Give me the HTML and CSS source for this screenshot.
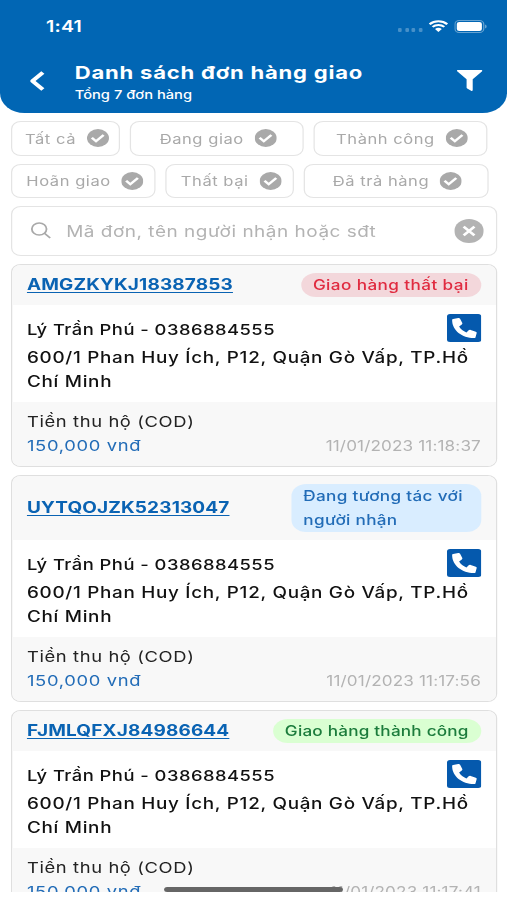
FILE: index.html
```html
<!DOCTYPE html>
<html lang="vi">
<head>
    <meta charset="UTF-8">
    <meta name="viewport" content="width=device-width, initial-scale=1.0">
    <title>Danh sách đơn hàng giao</title>
    <link rel="stylesheet" href="styles.css">
</head>
<body>
    <!-- Shared icons -->
    <svg class="icon-defs" width="0" height="0">
        <symbol id="check" viewBox="0 0 18 18">
            <circle cx="9" cy="9" r="9" fill="#a9a9a9"/>
            <path d="M4 8.800l3.400 3.400 6.200-6.200" fill="none" stroke="#fff" stroke-width="2.300"/>
        </symbol>
        <symbol id="phone" viewBox="0 0 28 28">
            <rect width="28" height="28" rx="2.500" fill="#0559ad"/>
            <path d="M4.2 6.2C4 5.500 4.300 5.100 5 4.900l4.200-.9c.7-.1 1.200.2 1.500.8l1.800 4.300c.2.6.1 1.100-.4 1.500l-2.200 1.900c1.400 2.800 3.200 4.600 6 6l1.800-2.200c.4-.5 1-.7 1.600-.4l4.200 1.800c.6.3.9.8.7 1.500l-.9 4c-.2.6-.5.900-1.200.9C12.300 24 4.200 16.200 4.200 6.200z" fill="#fff"/>
        </symbol>
    </svg>

    <div class="screen">
        <!-- Header -->
        <div class="header">
            <div class="status-bar">
                <span class="time">1:41</span>
                <div class="status-icons">
                    <div class="dots"><i></i><i></i><i></i><i></i></div>
                    <svg class="wifi" viewBox="0 0 16 12">
                        <path d="M.8 4.300a10.300 10.300 0 0 1 14.400 0M3.200 6.900a6.900 6.900 0 0 1 9.600 0" fill="none" stroke="#fff" stroke-width="2"/>
                        <path d="M5.200 9a4 4 0 0 1 5.600 0L8 12z" fill="#fff"/>
                    </svg>
                    <svg class="battery" viewBox="0 0 27 13">
                        <rect x=".5" y=".5" width="23.500" height="12" rx="3.500" fill="none" stroke="#fff" stroke-opacity=".4"/>
                        <rect x="2" y="2" width="20.500" height="9" rx="2" fill="#fff"/>
                        <path d="M25.200 4.500v4c1.500-.6 1.500-3.400 0-4z" fill="#fff" fill-opacity=".5"/>
                    </svg>
                </div>
            </div>
            <div class="nav-bar">
                <svg class="back" viewBox="0 0 14 22">
                    <path d="M12 2.500L3.500 11l8.500 8.500" fill="none" stroke="#fff" stroke-width="3.600" stroke-linejoin="round"/>
                </svg>
                <div class="titles">
                    <h1>Danh sách đơn hàng giao</h1>
                    <p>Tổng 7 đơn hàng</p>
                </div>
                <svg class="filter" viewBox="0 0 21 21">
                    <path d="M.8 0h19.400c.8 0 1 .8.500 1.300L13 9.200V20c0 .8-.6 1.200-1.300.7L8.500 18.500c-.4-.3-.5-.5-.5-1V9.200L.3 1.300C-.2.8 0 0 .8 0z" fill="#fff"/>
                </svg>
            </div>
        </div>

        <!-- Status filters -->
        <div class="chips chips-first">
            <div class="chip"><span>Tất cả</span><svg><use href="#check"/></svg></div>
            <div class="chip"><span>Đang giao</span><svg><use href="#check"/></svg></div>
            <div class="chip"><span>Thành công</span><svg><use href="#check"/></svg></div>
        </div>
        <div class="chips chips-second">
            <div class="chip"><span>Hoãn giao</span><svg><use href="#check"/></svg></div>
            <div class="chip"><span>Thất bại</span><svg><use href="#check"/></svg></div>
            <div class="chip"><span>Đã trả hàng</span><svg><use href="#check"/></svg></div>
        </div>

        <!-- Search box -->
        <div class="search">
            <svg class="magnifier" viewBox="0 0 17 17">
                <circle cx="7" cy="7" r="6" fill="none" stroke="#a9a9a9" stroke-width="1.500"/>
                <path d="M11.300 11.300L16 16" stroke="#a9a9a9" stroke-width="1.600"/>
            </svg>
            <span class="placeholder">Mã đơn, tên người nhận hoặc sđt</span>
            <svg class="clear" viewBox="0 0 24 24">
                <circle cx="12" cy="12" r="12" fill="#b3b3b3"/>
                <path d="M7.600 7.600l8.800 8.800M16.400 7.600l-8.800 8.800" stroke="#fff" stroke-width="2.300"/>
            </svg>
        </div>

        <!-- Orders -->
        <div class="orders">
            <div class="card">
                <div class="card-head">
                    <a class="code">AMGZKYKJ18387853</a>
                    <span class="pill failed">Giao hàng thất bại</span>
                </div>
                <div class="card-body">
                    <div class="receiver"><span>Lý Trần Phú - 0386884555</span><svg><use href="#phone"/></svg></div>
                    <p class="address">600/1 Phan Huy Ích, P12, Quận Gò Vấp, TP.Hồ<br>Chí Minh</p>
                </div>
                <div class="card-foot">
                    <p class="label">Tiền thu hộ (COD)</p>
                    <div class="foot-row"><span class="amount">150,000 vnđ</span><span class="date">11/01/2023 11:18:37</span></div>
                </div>
            </div>

            <div class="card">
                <div class="card-head">
                    <a class="code">UYTQOJZK52313047</a>
                    <span class="pill pending">Đang tương tác với<br>người nhận</span>
                </div>
                <div class="card-body">
                    <div class="receiver"><span>Lý Trần Phú - 0386884555</span><svg><use href="#phone"/></svg></div>
                    <p class="address">600/1 Phan Huy Ích, P12, Quận Gò Vấp, TP.Hồ<br>Chí Minh</p>
                </div>
                <div class="card-foot">
                    <p class="label">Tiền thu hộ (COD)</p>
                    <div class="foot-row"><span class="amount">150,000 vnđ</span><span class="date">11/01/2023 11:17:56</span></div>
                </div>
            </div>

            <div class="card">
                <div class="card-head">
                    <a class="code">FJMLQFXJ84986644</a>
                    <span class="pill success">Giao hàng thành công</span>
                </div>
                <div class="card-body">
                    <div class="receiver"><span>Lý Trần Phú - 0386884555</span><svg><use href="#phone"/></svg></div>
                    <p class="address">600/1 Phan Huy Ích, P12, Quận Gò Vấp, TP.Hồ<br>Chí Minh</p>
                </div>
                <div class="card-foot">
                    <p class="label">Tiền thu hộ (COD)</p>
                    <div class="foot-row"><span class="amount">150,000 vnđ</span><span class="date">11/01/2023 11:17:41</span></div>
                </div>
            </div>
        </div>

        <div class="home-indicator"></div>
    </div>
</body>
</html>
```

FILE: styles.css
```css
* {
    box-sizing: border-box;
}

body {
    margin: 0;
    height: 900px;
    background: #fff;
    font-family: Inter, "Noto Sans", sans-serif;
    overflow: hidden;
}

h1, p {
    margin: 0;
}

svg {
    display: block;
    flex: none;
}

.icon-defs {
    position: absolute;
}

/* 414pt wide phone layout, stretched to the full 507px */
.screen {
    position: relative;
    width: 414px;
    height: 892px;
    overflow: hidden;
    transform: scaleX(1.22464);
    transform-origin: 0 0;
}

/* Header */
.header {
    height: 113px;
    padding: 0 20px 0 24px;
    background: #0166b4;
    border-radius: 0 0 20px 20px;
    color: #fff;
}

.status-bar {
    display: flex;
    justify-content: space-between;
    height: 52px;
    padding: 16px 0 0 13.5px;
}

.time {
    font-size: 16px;
    font-weight: 600;
    line-height: 20px;
    letter-spacing: 0.2px;
}

.status-icons {
    display: flex;
    height: 20px;
    align-items: center;
}

.dots {
    display: flex;
    gap: 2.5px;
    margin: 8px 5px 0 0;
}

.dots i {
    width: 3px;
    height: 4px;
    border-radius: 1px;
    background: rgba(255, 255, 255, 0.28);
}

.wifi {
    width: 16px;
    height: 12px;
    margin-right: 5px;
}

.battery {
    width: 27px;
    height: 13px;
    margin-right: -3.5px;
}

.nav-bar {
    display: flex;
    align-items: flex-start;
}

.back {
    width: 14px;
    height: 22px;
    margin-top: 18px;
    margin-left: -1px;
}

.titles {
    flex: 1;
    padding: 9px 0 0 24px;
}

.titles h1 {
    font-size: 18px;
    font-weight: 700;
    line-height: 23px;
    letter-spacing: 0.64px;
    white-space: nowrap;
}

.titles p {
    font-size: 12px;
    font-weight: 500;
    line-height: 21px;
}

.filter {
    width: 21px;
    height: 21px;
    margin-top: 18px;
}

/* Status filters */
.chips {
    display: grid;
    gap: 8px;
    padding: 0 9px;
    margin-top: 8px;
}

.chips-first {
    grid-template-columns: 89px 142px 142px;
}

.chips-second {
    grid-template-columns: 118.4px 104.4px 151px;
}

.chip {
    display: flex;
    justify-content: center;
    align-items: center;
    gap: 8.5px;
    height: 34.5px;
    padding-left: 2px;
    border: 1px solid #e4e4e4;
    border-radius: 8px;
    color: #a9a9a9;
    font-size: 13.5px;
    letter-spacing: 0.45px;
    white-space: nowrap;
}

.chip span {
    padding-top: 1px;
}

.chip svg {
    width: 18px;
    height: 18px;
}

/* Search box */
.search {
    display: flex;
    align-items: center;
    height: 50.5px;
    margin: 7.5px 8.3px 0 9px;
    padding: 0 10px 0 15px;
    border: 1px solid #e4e4e4;
    border-radius: 8px;
}

.magnifier {
    width: 17px;
    height: 17px;
    margin-right: 12px;
}

.placeholder {
    flex: 1;
    padding-top: 1px;
    color: #b3b3b3;
    font-size: 15.5px;
    letter-spacing: 0.42px;
    white-space: nowrap;
}

.clear {
    width: 24px;
    height: 24px;
}

/* Order cards */
.orders {
    display: flex;
    flex-direction: column;
    gap: 8.5px;
    padding: 8px 8.3px 0 9px;
}

.card {
    flex: none;
    border: 1px solid #dfdfdf;
    border-radius: 8px;
    background: #fff;
    overflow: hidden;
}

.card-head {
    display: flex;
    justify-content: space-between;
    align-items: center;
    padding: 8px 12px;
    background: #f8f8f8;
}

.code {
    color: #0a63b3;
    font-size: 15.5px;
    font-weight: 700;
    line-height: 24px;
    letter-spacing: 0.12px;
    text-decoration: underline;
    text-decoration-thickness: 1px;
    text-underline-offset: 2px;
}

.pill {
    padding: 0 10px;
    border-radius: 12px;
    font-size: 14px;
    font-weight: 500;
    line-height: 24px;
    white-space: nowrap;
}

.failed {
    color: #e02b40;
    background: #f3d7db;
    letter-spacing: 0.33px;
}

.pending {
    width: 155px;
    color: #226cb7;
    background: #d9edff;
    letter-spacing: 0.26px;
}

.success {
    color: #1c7c3c;
    background: #daffd2;
    letter-spacing: 0.17px;
}

.card-body {
    height: 96.5px;
    padding: 9px 12px 0;
    color: #111;
    font-size: 15px;
    font-weight: 500;
    white-space: nowrap;
}

.receiver {
    display: flex;
    justify-content: space-between;
    align-items: center;
    height: 28px;
    letter-spacing: 0.38px;
}

.receiver span {
    padding-top: 2px;
}

.receiver svg {
    width: 28px;
    height: 28px;
}

.address {
    margin-top: 3.5px;
    line-height: 24px;
    font-size: 15.4px;
    letter-spacing: 0.58px;
}

.card-foot {
    padding: 8px 12px;
    background: #f8f8f8;
    line-height: 24px;
}

.label {
    color: #222;
    font-size: 15px;
    letter-spacing: 0.5px;
}

.foot-row {
    display: flex;
    justify-content: space-between;
}

.amount {
    color: #226cb7;
    font-size: 15px;
    letter-spacing: 0.55px;
}

.date {
    color: #b3b3b3;
    font-size: 14px;
    letter-spacing: 0.1px;
}

/* iOS home indicator */
.home-indicator {
    position: absolute;
    left: 134px;
    top: 887px;
    width: 146px;
    height: 5px;
    border-radius: 3px;
    background: #666;
}
```
